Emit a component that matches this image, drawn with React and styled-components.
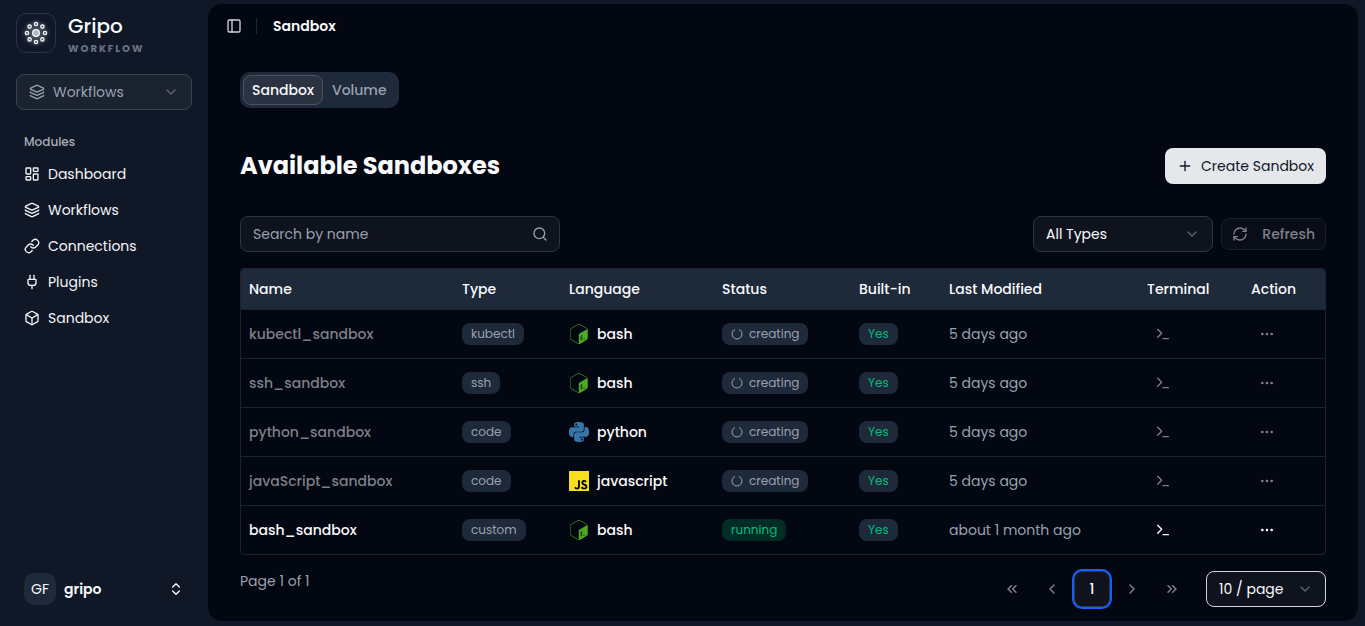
import { useState } from "react";
import styled, { createGlobalStyle } from "styled-components";
import {
  Box,
  ChevronDown,
  ChevronLeft,
  ChevronRight,
  ChevronsLeft,
  ChevronsRight,
  ChevronsUpDown,
  Ellipsis,
  Layers,
  LayoutDashboard,
  Link as LinkIcon,
  PanelLeft,
  Plug,
  Plus,
  RefreshCw,
  Search,
  Terminal,
} from "lucide-react";
import { SiGnubash, SiJavascript, SiPython } from "react-icons/si";

const GlobalStyle = createGlobalStyle`
  * {
    box-sizing: border-box;
  }

  body {
    margin: 0;
    background-color: #101828;
    color: #f9fafb;
    font-family: Poppins, Inter, sans-serif;
    font-size: 14px;
    line-height: 20px;
  }

  button, input, select {
    font: inherit;
    color: inherit;
  }
`;

const Layout = styled.div`
  display: flex;
  min-height: 100vh;
`;

const Sidebar = styled.aside`
  display: flex;
  flex-direction: column;
  flex-shrink: 0;
  width: 208px;
  padding: 13px 16px 21px;
`;

const Brand = styled.div`
  display: flex;
  gap: 12px;
  height: 40px;
`;

const BrandMark = styled.div`
  display: flex;
  align-items: center;
  justify-content: center;
  width: 40px;
  height: 40px;
  border: 1px solid #2a3342;
  border-radius: 10px;
  background-color: #0f1729;

  svg {
    filter: drop-shadow(0 0 2px rgba(255, 255, 255, 0.6));
  }
`;

const BrandName = styled.div`
  font-size: 20px;
  font-weight: 500;
  line-height: 27px;
`;

const BrandTag = styled.div`
  font-size: 10px;
  font-weight: 700;
  line-height: 17px;
  letter-spacing: 2px;
  color: #6a7282;
`;

const SelectWrap = styled.div`
  display: grid;
  align-items: center;
  width: ${(props) => props.$width || "100%"};

  > * {
    grid-area: 1 / 1;
  }

  svg {
    pointer-events: none;
  }

  svg:last-child {
    justify-self: end;
    margin-right: 13px;
    color: #5d6472;
  }

  svg:first-child {
    z-index: 1;
    margin-left: 13px;
  }
`;

const Select = styled.select`
  width: 100%;
  height: 36px;
  padding: 0 32px 0 ${(props) => (props.$icon ? "36px" : "12px")};
  appearance: none;
  outline: none;
  border: 1px solid ${(props) => props.$border || "#30353f"};
  border-radius: 8px;
  background-color: ${(props) => props.$bg || "#0f131d"};
`;

const ModuleSelect = styled(SelectWrap)`
  margin-top: 21px;
  color: #99a1af;
`;

const Modules = styled.nav`
  display: flex;
  flex-direction: column;
  gap: 4px;
  padding-top: 16px;
`;

const ModulesLabel = styled.div`
  padding: 6px 8px 2px;
  font-size: 12px;
  font-weight: 500;
  color: #a9adb5;
`;

const ModuleLink = styled.a`
  display: flex;
  align-items: center;
  gap: 8px;
  height: 32px;
  padding: 0 8px;
  color: #f3f4f6;
  text-decoration: none;
`;

const Account = styled.button`
  display: flex;
  align-items: center;
  gap: 8px;
  margin-top: auto;
  padding: 0 8px;
  border: 0;
  background: none;
  font-weight: 600;
  text-align: left;

  svg {
    margin-left: auto;
  }
`;

const Avatar = styled.span`
  display: flex;
  align-items: center;
  justify-content: center;
  width: 32px;
  height: 32px;
  border-radius: 10px;
  background-color: #1e2939;
  font-weight: 400;
`;

const Main = styled.main`
  flex: 1;
  min-width: 0;
  margin: 4px 7px 5px 0;
  border-radius: 14px;
  background-color: #030712;
`;

const TopBar = styled.header`
  display: flex;
  align-items: center;
  gap: 14px;
  height: 44px;
  padding: 0 18px;
  font-weight: 600;
`;

const Divider = styled.span`
  width: 1px;
  height: 16px;
  margin-right: 2px;
  background-color: #1f2430;
`;

const Content = styled.div`
  padding: 24px 32px 12px;
`;

const Tabs = styled.div`
  display: inline-flex;
  height: 36px;
  padding: 3px;
  border-radius: 10px;
  background-color: #1e2939;
`;

const Tab = styled.button`
  padding: 0 8px;
  border: 1px solid ${(props) => (props.$active ? "#4b5260" : "transparent")};
  border-radius: 8px;
  background-color: ${(props) => (props.$active ? "#2b3342" : "transparent")};
  color: ${(props) => (props.$active ? "#f9fafb" : "#99a1af")};
  font-weight: 500;
`;

const TitleRow = styled.div`
  display: flex;
  align-items: center;
  justify-content: space-between;
  margin-top: 40px;
`;

const Title = styled.h1`
  margin: 0;
  font-size: 24px;
  font-weight: 700;
  line-height: 32px;
`;

const CreateButton = styled.button`
  display: flex;
  align-items: center;
  gap: 8px;
  height: 36px;
  padding: 0 12px;
  border: 0;
  border-radius: 8px;
  background-color: #e5e7eb;
  color: #101828;
`;

const Filters = styled.div`
  display: flex;
  align-items: center;
  gap: 8px;
  margin: 32px 0 16px;
`;

const SearchBox = styled.label`
  display: flex;
  align-items: center;
  width: 320px;
  height: 36px;
  margin-right: auto;
  padding: 0 11px 0 12px;
  border: 1px solid #30353f;
  border-radius: 8px;
  background-color: #0f131d;
  color: #99a1af;

  input {
    flex: 1;
    min-width: 0;
    padding: 0;
    border: 0;
    outline: none;
    background: none;
  }

  input::placeholder {
    color: #99a1af;
    opacity: 1;
  }
`;

const RefreshButton = styled.button`
  display: flex;
  align-items: center;
  justify-content: space-between;
  width: 105px;
  height: 32px;
  padding: 0 10px;
  border: 1px solid #191d27;
  border-radius: 8px;
  background-color: #090d18;
  color: #7e8087;
  font-weight: 500;
`;

const TableFrame = styled.div`
  overflow: hidden;
  border: 1px solid #1d222d;
  border-radius: 4px;
`;

const Table = styled.table`
  width: 100%;
  table-layout: fixed;
  border-collapse: separate;
  border-spacing: 0;
  text-align: left;
`;

const Th = styled.th`
  width: ${(props) => props.$width}px;
  height: 41px;
  padding: 0 8px;
  border-bottom: 1px solid #1d222d;
  background-color: #1e2939;
  font-weight: 500;
`;

const Row = styled.tr`
  color: ${(props) => (props.$dim ? "#7e8087" : "#f9fafb")};

  &:last-child td {
    height: 48px;
    border-bottom: 0;
  }
`;

const Td = styled.td`
  height: 49px;
  padding: 0 8px;
  border-bottom: 1px solid #1d222d;
  white-space: nowrap;
`;

const NameCell = styled(Td)`
  font-weight: 500;
`;

const DateCell = styled(Td)`
  color: #99a1af;
`;

const Language = styled.div`
  display: flex;
  align-items: center;
  gap: 8px;
  color: #f9fafb;
  font-weight: 500;
`;

const tones = {
  gray: ["#1e2939", "#99a1af"],
  yes: ["#1e2939", "#00bc7d"],
  running: ["#022c26", "#00bc7d"],
};

const Badge = styled.span`
  display: flex;
  align-items: center;
  gap: 6px;
  width: fit-content;
  height: 22px;
  padding: 0 9px;
  border-radius: 8px;
  background-color: ${(props) => tones[props.$tone][0]};
  color: ${(props) => tones[props.$tone][1]};
  font-size: 12px;
`;

const IconButton = styled.button`
  display: flex;
  align-items: center;
  justify-content: center;
  width: 32px;
  height: 32px;
  padding: 0;
  border: 0;
  background: none;
`;

const SidebarToggle = styled(IconButton)`
  width: 16px;
  color: #d1d5db;
`;

const Footer = styled.div`
  display: flex;
  justify-content: space-between;
  margin-top: 16px;
  color: #99a1af;
`;

const Pager = styled.div`
  display: flex;
  align-items: center;
  gap: 4px;

  ${SelectWrap} {
    margin-left: 12px;
    color: #f9fafb;
  }
`;

const PageButton = styled(IconButton)`
  width: 36px;
  height: 36px;
  color: #83868e;
`;

const CurrentPage = styled(PageButton)`
  border: 1px solid #30353f;
  border-radius: 8px;
  background-color: #0f131d;
  box-shadow: 0 0 0 2px #155dfc;
  color: #f9fafb;
  font-weight: 500;
`;

const modules = [
  { label: "Dashboard", Icon: LayoutDashboard },
  { label: "Workflows", Icon: Layers },
  { label: "Connections", Icon: LinkIcon },
  { label: "Plugins", Icon: Plug },
  { label: "Sandbox", Icon: Box },
];

const columns = [
  ["Name", 213],
  ["Type", 107],
  ["Language", 153],
  ["Status", 137],
  ["Built-in", 90],
  ["Last Modified", 198],
  ["Terminal", 104],
  ["Action", 82],
];

const languages = {
  bash: { Icon: SiGnubash, color: "#4eaa25" },
  python: { Icon: SiPython, color: "#3776ab" },
  javascript: { Icon: SiJavascript, color: "#f7df1e" },
};

const sandboxes = [
  { name: "kubectl_sandbox", type: "kubectl", language: "bash", status: "creating", modified: "5 days ago" },
  { name: "ssh_sandbox", type: "ssh", language: "bash", status: "creating", modified: "5 days ago" },
  { name: "python_sandbox", type: "code", language: "python", status: "creating", modified: "5 days ago" },
  { name: "javaScript_sandbox", type: "code", language: "javascript", status: "creating", modified: "5 days ago" },
  { name: "bash_sandbox", type: "custom", language: "bash", status: "running", modified: "about 1 month ago" },
];

const petals = [
  [12, 3],
  [18.4, 5.6],
  [21, 12],
  [18.4, 18.4],
  [12, 21],
  [5.6, 18.4],
  [3, 12],
  [5.6, 5.6],
];

const Logo = () => (
  <svg width="24" height="24" viewBox="0 0 24 24" fill="none" stroke="#f3f4f6">
    {petals.map(([x, y]) => (
      <circle key={`${x}-${y}`} cx={x} cy={y} r="1.6" strokeWidth="1.4" />
    ))}
    <circle cx="12" cy="12" r="3.4" fill="#b4b8c0" strokeWidth="1.2" />
  </svg>
);

const Spinner = () => (
  <svg width="12" height="12" viewBox="0 0 12 12" fill="none" stroke="currentColor">
    <path d="M4 1.4a5 5 0 1 0 4 0" />
  </svg>
);

const SandboxRow = ({ sandbox }) => {
  const creating = sandbox.status === "creating";
  const { Icon, color } = languages[sandbox.language];

  return (
    <Row $dim={creating}>
      <NameCell>{sandbox.name}</NameCell>
      <Td>
        <Badge $tone="gray">{sandbox.type}</Badge>
      </Td>
      <Td>
        <Language>
          <Icon size={20} color={color} />
          {sandbox.language}
        </Language>
      </Td>
      <Td>
        <Badge $tone={creating ? "gray" : "running"}>
          {creating && <Spinner />}
          {sandbox.status}
        </Badge>
      </Td>
      <Td>
        <Badge $tone="yes">Yes</Badge>
      </Td>
      <DateCell>{sandbox.modified}</DateCell>
      <Td>
        <IconButton aria-label={`Open terminal of ${sandbox.name}`} disabled={creating}>
          <Terminal size={16} />
        </IconButton>
      </Td>
      <Td>
        <IconButton aria-label={`Actions for ${sandbox.name}`} disabled={creating}>
          <Ellipsis size={16} />
        </IconButton>
      </Td>
    </Row>
  );
};

const App = () => {
  const [tab, setTab] = useState("Sandbox");
  const [query, setQuery] = useState("");

  const rows = sandboxes.filter((sandbox) => sandbox.name.toLowerCase().includes(query.toLowerCase()));

  return (
    <Layout>
      <GlobalStyle />
      <Sidebar>
        <Brand>
          <BrandMark>
            <Logo />
          </BrandMark>
          <div>
            <BrandName>Gripo</BrandName>
            <BrandTag>WORKFLOW</BrandTag>
          </div>
        </Brand>
        <ModuleSelect>
          <Layers size={16} />
          <Select $icon $bg="#1b2230" $border="#3a4150" aria-label="Area">
            <option>Workflows</option>
          </Select>
          <ChevronDown size={16} />
        </ModuleSelect>
        <Modules>
          <ModulesLabel>Modules</ModulesLabel>
          {modules.map(({ label, Icon }) => (
            <ModuleLink key={label} href="#">
              <Icon size={16} />
              {label}
            </ModuleLink>
          ))}
        </Modules>
        <Account>
          <Avatar>GF</Avatar>
          gripo
          <ChevronsUpDown size={16} />
        </Account>
      </Sidebar>

      <Main>
        <TopBar>
          <SidebarToggle aria-label="Toggle sidebar">
            <PanelLeft size={16} />
          </SidebarToggle>
          <Divider />
          Sandbox
        </TopBar>
        <Content>
          <Tabs role="tablist">
            {["Sandbox", "Volume"].map((label) => (
              <Tab
                key={label}
                role="tab"
                aria-selected={tab === label}
                $active={tab === label}
                onClick={() => setTab(label)}
              >
                {label}
              </Tab>
            ))}
          </Tabs>

          <TitleRow>
            <Title>Available Sandboxes</Title>
            <CreateButton>
              <Plus size={16} />
              Create Sandbox
            </CreateButton>
          </TitleRow>

          <Filters>
            <SearchBox>
              <input
                aria-label="Search by name"
                placeholder="Search by name"
                value={query}
                onChange={(e) => setQuery(e.target.value)}
              />
              <Search size={16} />
            </SearchBox>
            <SelectWrap $width="180px">
              <Select aria-label="Type">
                <option>All Types</option>
              </Select>
              <ChevronDown size={16} />
            </SelectWrap>
            <RefreshButton>
              <RefreshCw size={16} />
              Refresh
            </RefreshButton>
          </Filters>

          <TableFrame>
            <Table>
              <thead>
                <tr>
                  {columns.map(([label, width]) => (
                    <Th key={label} $width={width}>
                      {label}
                    </Th>
                  ))}
                </tr>
              </thead>
              <tbody>
                {rows.map((sandbox) => (
                  <SandboxRow key={sandbox.name} sandbox={sandbox} />
                ))}
              </tbody>
            </Table>
          </TableFrame>

          <Footer>
            <div>Page 1 of 1</div>
            <Pager>
              <PageButton aria-label="First page">
                <ChevronsLeft size={16} />
              </PageButton>
              <PageButton aria-label="Previous page">
                <ChevronLeft size={16} />
              </PageButton>
              <CurrentPage>1</CurrentPage>
              <PageButton aria-label="Next page">
                <ChevronRight size={16} />
              </PageButton>
              <PageButton aria-label="Last page">
                <ChevronsRight size={16} />
              </PageButton>
              <SelectWrap $width="120px">
                <Select $border="#d1d5db" aria-label="Rows per page">
                  <option>10 / page</option>
                </Select>
                <ChevronDown size={16} />
              </SelectWrap>
            </Pager>
          </Footer>
        </Content>
      </Main>
    </Layout>
  );
};

export default App;
